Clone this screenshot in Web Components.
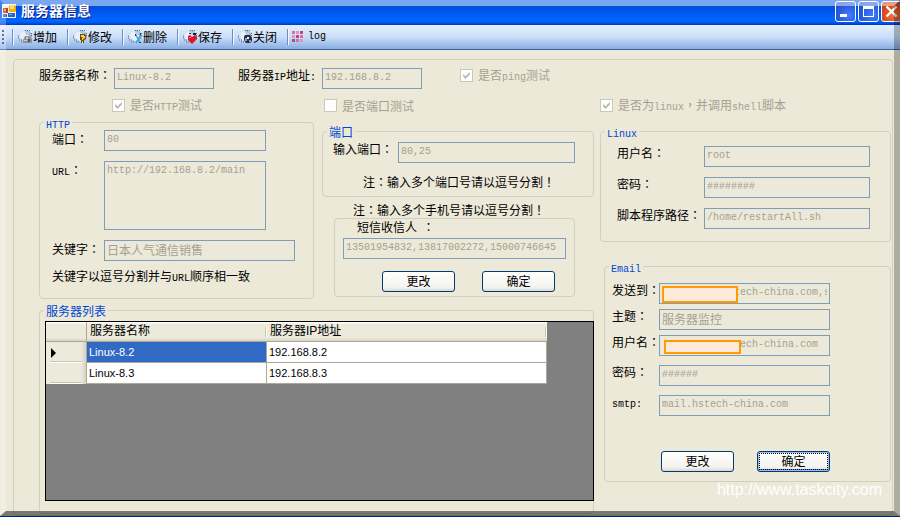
<!DOCTYPE html>
<html lang="zh-CN">
<head>
<meta charset="utf-8">
<title>服务器信息</title>
<style>
html,body{margin:0;min-height:100vh;background:#ece9d8}
body{font:12px/16px "Noto Sans CJK SC",sans-serif;color:#000}
</style>
</head>
<body>
<app-window></app-window>
<script>
const TEXT = `*{box-sizing:border-box}
.m{font-family:"Liberation Mono",monospace;font-size:10px;line-height:1}
.p{font-family:"Noto Sans CJK TC",sans-serif;line-height:1}`;

/* Latin runs use the half-width face, full-width punctuation the centred one */
const rich = s => s.replace(/[A-Za-z0-9:.]+/g, '<span class="m">$&</span>')
                   .replace(/[：！，]/g, '<span class="p" lang="zh-TW">$&</span>');

const define = (name, render) => customElements.define(name, class extends HTMLElement {
  connectedCallback() {
    if (this.shadowRoot) return;
    this.attachShadow({mode: 'open'}).innerHTML = render(this);
  }
});

define('rich-text', el => `<style>${TEXT}:host{display:block;white-space:nowrap;line-height:16px}</style>${rich(el.getAttribute('text'))}`);

define('text-field', el => {
  const v = el.getAttribute('value') || '';
  const label = el.getAttribute('label');
  const cls = /[^\x00-\x7f]/.test(v) ? '' : 'mono';
  const box = el.hasAttribute('multiline')
    ? `<textarea id="f" class="${cls}" disabled>${v}</textarea>`
    : `<input id="f" type="text" class="${cls}" value="${v}" disabled>`;
  return `<style>${TEXT}
  :host{display:flex;align-items:flex-start;min-width:0}
  label{flex:none;width:var(--label-w,auto);line-height:var(--label-lh,14px);white-space:nowrap}
  .wrap{position:relative;flex:1;min-width:0;display:flex}
  input,textarea{flex:1;min-width:0;width:100%;height:21px;margin:0;padding:0 2px 3px;border:1px solid #7f9db9;border-radius:0;
    background:#ece9d8;color:#a5a191;font:12px/16px "Noto Sans CJK SC",sans-serif;outline:0}
  .mono{font:10px/14px "Liberation Mono",monospace}
  textarea{height:69px;resize:none;padding-top:2px;overflow:hidden}
  </style>${label ? `<label for="f">${rich(label)}</label>` : ''}<div class="wrap">${box}<slot></slot></div>`;
});

define('mask-patch', () => `<style>:host{position:absolute;box-sizing:border-box;border:2px solid #ff9a00;background:#fde9d9}</style>`);

define('check-field', el => `<style>${TEXT}
  :host{display:block}
  label{display:flex;align-items:center;gap:5px;height:13px;line-height:13px;color:#a5a191;white-space:nowrap}
  input{appearance:none;flex:none;width:13px;height:13px;margin:0;border:1px solid #cac8bb;background:#fff;position:relative}
  input:checked::after{content:"";position:absolute;inset:2px;background:#bcbaa9;clip-path:polygon(0 29%,0 62%,36% 100%,100% 36%,100% 0,36% 62%)}
  </style><label><input type="checkbox" disabled ${el.hasAttribute('checked') ? 'checked' : ''}><span>${rich(el.getAttribute('label'))}</span></label>`);

define('push-button', () => `<style>
  :host{display:block;width:73px}
  button{box-sizing:border-box;width:100%;height:21px;padding:0 0 2px;border:1px solid #003c74;border-radius:3px;
    background:linear-gradient(#fff,#f4f3ee 80%,#dcd8cc);font:12px/16px "Noto Sans CJK SC",sans-serif;color:#000;display:block}
  :host([default]) button{box-shadow:inset 0 0 0 1px #9ebbee,inset 0 -2px 0 #6982ee;outline:1px dotted #000;outline-offset:-3px}
  </style><button type="button"><slot></slot></button>`);

define('group-box', el => {
  const t = el.getAttribute('legend');
  return `<style>${TEXT}
  :host{display:flex;flex-direction:column;min-width:0}
  fieldset{flex:1;min-width:0;margin:0;padding:0;border:1px solid #d0d0bf;border-radius:4px;display:flex;flex-direction:column}
  legend{margin-left:4px;padding:0 2px;height:15px;line-height:15px;color:#0046d5}
  .body{flex:1;min-width:0;padding:var(--pad,0);display:flex;flex-direction:column}
  </style><fieldset>${t ? `<legend>${rich(t)}</legend>` : ''}<div class="body"><slot></slot></div></fieldset>`;
});

define('data-grid', () => `<style>*{box-sizing:border-box}
  :host{display:block;box-sizing:border-box;background:#808080;border:1px solid #000}
  table{border-collapse:separate;border-spacing:0;table-layout:fixed;width:501px;font:11px/14px "Liberation Sans","Noto Sans CJK SC",sans-serif}
  th,td{padding:0 2px;text-align:left;font-weight:normal;white-space:nowrap}
  thead th{height:20px;padding:0 3px 2px;font-size:12px;background:linear-gradient(#fff 1px,#ebeadb 2px,#ebeadb 16px,#d6d2c2 19px);border-bottom:1px solid #aca899;position:relative}
  thead th:not(:first-child)::after{content:"";position:absolute;right:0;top:5px;width:2px;height:10px;background:linear-gradient(90deg,#c7c5b2 50%,#fff 50%)}
  thead th:first-child{border-right:1px solid #aca899}
  tbody th,tbody td{height:21px}
  td{background:#fff;border-right:1px solid #aca899;border-bottom:1px solid #aca899}
  tbody th{padding:0 5px;background:linear-gradient(90deg,#ebeadb 35px,#d6d2c2 40px);border-right:1px solid #aca899;position:relative}
  tbody th::after{content:"";position:absolute;left:4px;right:4px;bottom:0;height:2px;background:linear-gradient(#c7c5b2 50%,#fff 50%)}
  svg{display:block}
  .sel{background:#316ac5;color:#fff}
  </style><table><colgroup><col style="width:41px"><col style="width:180px"><col style="width:280px"></colgroup>
  <thead><tr><th></th><th>服务器名称</th><th>服务器IP地址</th></tr></thead>
  <tbody><tr><th><svg width="6" height="10"><path d="M0 0L5 5L0 10Z"/></svg></th><td class="sel">Linux-8.2</td><td>192.168.8.2</td></tr>
  <tr><th></th><td>Linux-8.3</td><td>192.168.8.3</td></tr></tbody></table>`);

define('title-bar', el => `<style>
  :host{display:flex;align-items:flex-start;height:25px;overflow:hidden;padding-left:2px;box-sizing:border-box;
    background:linear-gradient(#0058e6 0,#0050e0 8px,#0058f0 13px,#0066ff 20px,#0060f8 22px,#0038b8 25px)}
  .logo{margin-top:3px;flex:none}
  h1{flex:1;margin:0;padding-left:4px;font:bold 14px/20px "Noto Sans CJK SC",sans-serif;color:#fff;text-shadow:1px 1px 0 #0a1883}
  .ctl{display:flex;gap:2px;margin:1px -2px 0 0}
  button{width:21px;height:21px;padding:0;border:1px solid #fff;border-radius:3px;background:radial-gradient(circle at 70% 70%,#3f7dff,#2b5fe0 50%,#1d44c0)}
  .x{background:radial-gradient(circle at 60% 70%,#f0703c,#d84a20 60%,#b83410)}
  svg{display:block}
  </style>
  <svg class="logo" width="15" height="15"><path fill="#f4f4ee" d="M0 1h14v14H0z"/><path fill="#c83c1c" d="M1 5h5v5H1z"/><path fill="#e88060" d="M2 6h2v2H2z"/><path fill="#f0b010" d="M7 2h7v7H7z"/><path fill="#ffe070" d="M8 3h4v3H8z"/><path fill="#2a62c8" d="M1 11h4v3H1zM6 10h7v4H6z"/><path fill="#80a8e8" d="M7 11h3v1H7z"/></svg>
  <h1>${el.getAttribute('text')}</h1>
  <div class="ctl"><button type="button" aria-label="最小化"><svg width="19" height="19"><path fill="#fff" d="M4 12h7v3H4z"/></svg></button>
  <button type="button" aria-label="最大化"><svg width="19" height="19"><path fill="#fff" fill-rule="evenodd" d="M4 4h11v11H4zM5 7v7h9V7z"/></svg></button>
  <button type="button" class="x" aria-label="关闭"><svg width="19" height="19"><path stroke="#fff" stroke-width="2.4" d="M4.500 4.500l10 10M14.500 4.500l-10 10"/></svg></button></div>`);

const DISC = `<ellipse cx="9" cy="7" rx="6" ry="5.500" fill="#9db6d6" transform="rotate(35 9 7)"/><ellipse cx="7.500" cy="7" rx="4.500" ry="5" fill="#e6effa" transform="rotate(-25 7.500 7)"/><path fill="#b8cce6" d="M8 3h4v3H9z"/><path fill="none" stroke="#4f6888" stroke-dasharray="1 1" d="M1 7h2M1 9h2M2 11h3M4 13h3M8 1.500h5M14.500 4v4"/>`;
const ICONS = {
  add: DISC + `<path fill="#8c9298" d="M8 7h5l2 3v4H6v-3z"/><path fill="#c8ccd0" d="M9 8h2v2H9zM7 11h3v1H7z"/><path fill="#50565c" d="M11 10h2v3h-2z"/>`,
  edit: DISC + `<path fill="#6b4f10" d="M8 5h5l1 2v3l-2 1v3H9v-3H8z"/><path fill="#ffd22c" d="M9 6h3v1h1v2l-2 1v1h-1V9l1-1H9zM10 12h1v2h-1z"/>`,
  del: DISC + `<path fill="none" stroke="#38a8d8" stroke-width="1.500" d="M9 6l4 8M14 6l-5 8"/><path fill="#2b3c58" d="M8 5h1v2H8zM13 4h1v2h-1zM12 13h2v1h-2z"/>`,
  save: DISC + `<path fill="#1f2838" d="M7 4h2v1H7zM11 4h3v2h-3z"/><path fill="#d81828" d="M6 7l2-1 2 2 3-2 2 2v2l-5 5-4-4z"/><path fill="#ff8088" d="M7 8h2v1H7z"/>`,
  close: DISC + `<path fill="#26303c" d="M8 6h5l2 3v3l-2 2H9l-2-3V8z"/><path fill="#8fa2b8" d="M8 9h2v3H8zM12 11h2v2h-2z"/><path fill="#f4f8fc" d="M10 8h2v2h-2z"/>`,
  log: [0,1,2].map(r => [0,1,2].map(c => `<path fill="${['#d070a8','#e890b8','#b84888'][(r + c) % 3]}" d="M${c * 4} ${2 + r * 4}h3v3h-3z"/>`).join('')).join('')
};
define('tool-item', el => `<style>${TEXT}
  :host{display:flex;align-items:center;height:24px}
  i{width:2px;height:16px;background:linear-gradient(90deg,#6a8ccb 50%,#f1f9ff 50%);margin-right:3px}
  button{display:flex;align-items:center;height:22px;width:50px;padding:0;border:0;background:none;font:12px/16px "Noto Sans CJK SC",sans-serif;color:#000;white-space:nowrap}
  svg{flex:none}
  </style><i></i><button type="button"><svg width="16" height="16">${ICONS[el.getAttribute('icon')]}</svg>${rich(el.getAttribute('text'))}</button>`);

define('tool-bar', () => `<style>
  :host{display:flex;align-items:center;height:25px;box-sizing:border-box;padding-left:2px;border-bottom:1px solid #3b619c;background:linear-gradient(#e3efff,#cbdef8 50%,#89aee5)}
  svg{flex:none;margin-right:7px}
  </style><svg width="3" height="16"><path fill="#27417a" d="M0 1h2v2H0zM0 5h2v2H0zM0 9h2v2H0zM0 13h2v2H0z"/></svg><slot></slot>`);

define('server-form', () => `<style>*{box-sizing:border-box}
  :host{display:flex;flex-direction:column;flex:1;padding:9px 7px 0 13px}
  .outer{flex:1;--pad:8px 1px 0 25px}
  .row{display:flex}
  .head{gap:24px}
  .head text-field{flex:none}
  .name{width:175px;--label-w:75px}
  .ip{width:184px;--label-w:84px}
  .head check-field{margin:1px 0 0 14px}
  .checks,.cols{display:grid;grid-template-columns:minmax(0,1fr) 272px;column-gap:8px}
  .page{display:grid;grid-template-columns:minmax(0,1fr) 291px;column-gap:6px}
  .tests{margin-top:10px}
  .tests .checks check-field:first-child{margin-left:73px}
  .tests .checks check-field:last-child{margin-left:2px}
  .fill{flex:1;margin-top:3px}
  .left,.right,.mid,.stack{display:flex;flex-direction:column}
  .http{--pad:0 18px 14px 12px;--label-w:52px;--label-lh:18px}
  .http .stack{gap:10px}
  .short{margin-right:29px}
  .http rich-text{margin-top:7px}
  .mid,.right{padding-top:9px}
  .port{--pad:3px 18px 6px 10px;--label-w:65px}
  .port rich-text{margin:11px 0 0 30px}
  .mid > rich-text{margin:5px 0 0 31px}
  .sms{margin:0 19px 0 12px;--pad:0 8px 4px 8px}
  .sms rich-text{margin:0 0 3px 14px}
  .btns{display:flex;justify-content:flex-end}
  .sms .btns{margin-top:12px;gap:27px;padding-right:11px}
  .list{flex:1;margin-top:4px;--pad:3px 0 12px 5px}
  data-grid{flex:1;margin-right:-1px;min-height:180px}
  .linux{--pad:7px 20px 12px 16px;--label-w:87px}
  .linux .stack{gap:10px}
  .email{margin:17px 0 0 4px;--pad:9px 60px 9px 7px;--label-w:47px}
  .stack.near{gap:5px}
  .stack.wide{gap:9px}
  .email .btns{margin-top:35px;gap:23px}
  .m1{left:3px;top:3px;width:76px;height:17px}
  .m2{left:5px;top:5px;width:77px;height:14px}
  </style>
  <group-box class="outer">
    <div class="row head">
      <text-field class="name" label="服务器名称：" value="Linux-8.2"></text-field>
      <text-field class="ip" label="服务器IP地址:" value="192.168.8.2"></text-field>
      <check-field label="是否ping测试" checked></check-field>
    </div>
    <div class="page tests">
      <div class="checks"><check-field label="是否HTTP测试" checked></check-field><check-field label="是否端口测试"></check-field></div>
      <check-field label="是否为linux，并调用shell脚本" checked></check-field>
    </div>
    <div class="page fill">
      <div class="left">
        <div class="cols">
          <group-box class="http" legend="HTTP">
            <div class="stack">
              <text-field class="short" label="端口：" value="80"></text-field>
              <text-field class="short" multiline label="URL：" value="http://192.168.8.2/main"></text-field>
              <text-field label="关键字：" value="日本人气通信销售"></text-field>
            </div>
            <rich-text text="关键字以逗号分割并与URL顺序相一致"></rich-text>
          </group-box>
          <div class="mid">
            <group-box class="port" legend="端口">
              <text-field label="输入端口：" value="80,25"></text-field>
              <rich-text text="注：输入多个端口号请以逗号分割！"></rich-text>
            </group-box>
            <rich-text text="注：输入多个手机号请以逗号分割！"></rich-text>
            <group-box class="sms">
              <rich-text text="短信收信人&nbsp; ："></rich-text>
              <text-field value="13501954832,13817002272,15000746645"></text-field>
              <div class="btns"><push-button>更改</push-button><push-button>确定</push-button></div>
            </group-box>
          </div>
        </div>
        <group-box class="list" legend="服务器列表"><data-grid></data-grid></group-box>
      </div>
      <div class="right">
        <group-box class="linux" legend="Linux">
          <div class="stack">
            <text-field label="用户名：" value="root"></text-field>
            <text-field label="密码：" value="########"></text-field>
            <text-field label="脚本程序路径：" value="/home/restartAll.sh"></text-field>
          </div>
        </group-box>
        <group-box class="email" legend="Email">
          <div class="stack wide">
            <div class="stack near">
              <text-field label="发送到：" value="            tech-china.com,s"><mask-patch class="m1"></mask-patch></text-field>
              <text-field label="主题：" value="服务器监控"></text-field>
              <text-field label="用户名：" value="            tech-china.com"><mask-patch class="m2"></mask-patch></text-field>
            </div>
            <text-field label="密码：" value="######"></text-field>
            <text-field label="smtp:" value="mail.hstech-china.com"></text-field>
          </div>
          <div class="btns"><push-button>更改</push-button><push-button default>确定</push-button></div>
        </group-box>
      </div>
    </div>
  </group-box>`);

define('app-window', () => `<style>
  :host{display:flex;flex-direction:column;min-height:100vh;box-sizing:border-box;position:relative;border-bottom:1px solid #00248c;background:#ece9d8;overflow:hidden}
  .bevel{position:absolute;inset:0;pointer-events:none;border-style:solid;border-width:6px 6px 5px;border-color:rgba(255,255,255,.48) rgba(0,0,0,.26) rgba(0,0,0,.48) rgba(255,255,255,.26)}
  .mark{position:absolute;right:18px;bottom:16px;font:16px/20px "Liberation Sans",sans-serif;color:#fff}
  </style>
  <title-bar text="服务器信息"></title-bar>
  <tool-bar>
    <tool-item icon="add" text="增加"></tool-item><tool-item icon="edit" text="修改"></tool-item><tool-item icon="del" text="删除"></tool-item><tool-item icon="save" text="保存"></tool-item><tool-item icon="close" text="关闭"></tool-item><tool-item icon="log" text="log"></tool-item>
  </tool-bar>
  <server-form></server-form>
  <div class="mark">http://www.taskcity.com</div>
  <div class="bevel"></div>`);
</script>
</body>
</html>
